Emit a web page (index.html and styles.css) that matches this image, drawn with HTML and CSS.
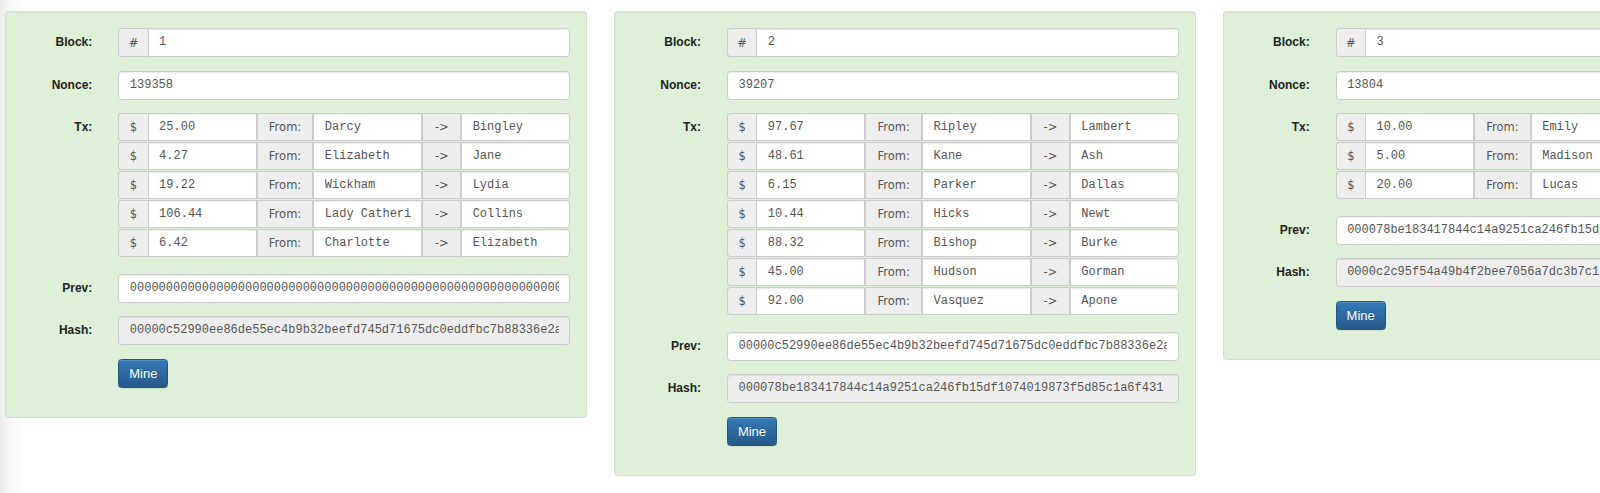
FILE: index.html
```html
<!DOCTYPE html>
<html>
<head>
<meta charset="utf-8">
<title>Blockchain</title>
<link rel="stylesheet" href="styles.css">
</head>
<body>
<div class="chain">

  <div class="well">
    <div class="row"><label class="lbl">Block:</label>
      <div class="group"><span class="addon a-sym first">#</span><div class="field last"><span class="val">1</span></div></div>
    </div>
    <div class="row"><label class="lbl">Nonce:</label>
      <div class="field solo"><span class="val">139358</span></div>
    </div>
    <div class="row txrow"><label class="lbl">Tx:</label>
      <div class="txs">
        <div class="tx"><span class="addon a-sym first">$</span><div class="field"><span class="val">25.00</span></div><span class="addon a-from">From:</span><div class="field"><span class="val">Darcy</span></div><span class="addon a-arrow">-&gt;</span><div class="field last"><span class="val">Bingley</span></div></div>
        <div class="tx"><span class="addon a-sym first">$</span><div class="field"><span class="val">4.27</span></div><span class="addon a-from">From:</span><div class="field"><span class="val">Elizabeth</span></div><span class="addon a-arrow">-&gt;</span><div class="field last"><span class="val">Jane</span></div></div>
        <div class="tx"><span class="addon a-sym first">$</span><div class="field"><span class="val">19.22</span></div><span class="addon a-from">From:</span><div class="field"><span class="val">Wickham</span></div><span class="addon a-arrow">-&gt;</span><div class="field last"><span class="val">Lydia</span></div></div>
        <div class="tx"><span class="addon a-sym first">$</span><div class="field"><span class="val">106.44</span></div><span class="addon a-from">From:</span><div class="field"><span class="val">Lady Catherine</span></div><span class="addon a-arrow">-&gt;</span><div class="field last"><span class="val">Collins</span></div></div>
        <div class="tx"><span class="addon a-sym first">$</span><div class="field"><span class="val">6.42</span></div><span class="addon a-from">From:</span><div class="field"><span class="val">Charlotte</span></div><span class="addon a-arrow">-&gt;</span><div class="field last"><span class="val">Elizabeth</span></div></div>
      </div>
    </div>
    <div class="row"><label class="lbl">Prev:</label>
      <div class="field solo"><span class="val">0000000000000000000000000000000000000000000000000000000000000000</span></div>
    </div>
    <div class="row"><label class="lbl">Hash:</label>
      <div class="field solo ro"><span class="val">00000c52990ee86de55ec4b9b32beefd745d71675dc0eddfbc7b88336e2a</span></div>
    </div>
    <div class="row"><span></span>
      <div><button class="mine">Mine</button></div>
    </div>
  </div>

  <div class="well">
    <div class="row"><label class="lbl">Block:</label>
      <div class="group"><span class="addon a-sym first">#</span><div class="field last"><span class="val">2</span></div></div>
    </div>
    <div class="row"><label class="lbl">Nonce:</label>
      <div class="field solo"><span class="val">39207</span></div>
    </div>
    <div class="row txrow"><label class="lbl">Tx:</label>
      <div class="txs">
        <div class="tx"><span class="addon a-sym first">$</span><div class="field"><span class="val">97.67</span></div><span class="addon a-from">From:</span><div class="field"><span class="val">Ripley</span></div><span class="addon a-arrow">-&gt;</span><div class="field last"><span class="val">Lambert</span></div></div>
        <div class="tx"><span class="addon a-sym first">$</span><div class="field"><span class="val">48.61</span></div><span class="addon a-from">From:</span><div class="field"><span class="val">Kane</span></div><span class="addon a-arrow">-&gt;</span><div class="field last"><span class="val">Ash</span></div></div>
        <div class="tx"><span class="addon a-sym first">$</span><div class="field"><span class="val">6.15</span></div><span class="addon a-from">From:</span><div class="field"><span class="val">Parker</span></div><span class="addon a-arrow">-&gt;</span><div class="field last"><span class="val">Dallas</span></div></div>
        <div class="tx"><span class="addon a-sym first">$</span><div class="field"><span class="val">10.44</span></div><span class="addon a-from">From:</span><div class="field"><span class="val">Hicks</span></div><span class="addon a-arrow">-&gt;</span><div class="field last"><span class="val">Newt</span></div></div>
        <div class="tx"><span class="addon a-sym first">$</span><div class="field"><span class="val">88.32</span></div><span class="addon a-from">From:</span><div class="field"><span class="val">Bishop</span></div><span class="addon a-arrow">-&gt;</span><div class="field last"><span class="val">Burke</span></div></div>
        <div class="tx"><span class="addon a-sym first">$</span><div class="field"><span class="val">45.00</span></div><span class="addon a-from">From:</span><div class="field"><span class="val">Hudson</span></div><span class="addon a-arrow">-&gt;</span><div class="field last"><span class="val">Gorman</span></div></div>
        <div class="tx"><span class="addon a-sym first">$</span><div class="field"><span class="val">92.00</span></div><span class="addon a-from">From:</span><div class="field"><span class="val">Vasquez</span></div><span class="addon a-arrow">-&gt;</span><div class="field last"><span class="val">Apone</span></div></div>
      </div>
    </div>
    <div class="row"><label class="lbl">Prev:</label>
      <div class="field solo"><span class="val">00000c52990ee86de55ec4b9b32beefd745d71675dc0eddfbc7b88336e2a</span></div>
    </div>
    <div class="row"><label class="lbl">Hash:</label>
      <div class="field solo ro"><span class="val">000078be183417844c14a9251ca246fb15df1074019873f5d85c1a6f431</span></div>
    </div>
    <div class="row"><span></span>
      <div><button class="mine">Mine</button></div>
    </div>
  </div>

  <div class="well">
    <div class="row"><label class="lbl">Block:</label>
      <div class="group"><span class="addon a-sym first">#</span><div class="field last"><span class="val">3</span></div></div>
    </div>
    <div class="row"><label class="lbl">Nonce:</label>
      <div class="field solo"><span class="val">13804</span></div>
    </div>
    <div class="row txrow"><label class="lbl">Tx:</label>
      <div class="txs">
        <div class="tx"><span class="addon a-sym first">$</span><div class="field"><span class="val">10.00</span></div><span class="addon a-from">From:</span><div class="field"><span class="val">Emily</span></div><span class="addon a-arrow">-&gt;</span><div class="field last"><span class="val">Jacob</span></div></div>
        <div class="tx"><span class="addon a-sym first">$</span><div class="field"><span class="val">5.00</span></div><span class="addon a-from">From:</span><div class="field"><span class="val">Madison</span></div><span class="addon a-arrow">-&gt;</span><div class="field last"><span class="val">Ethan</span></div></div>
        <div class="tx"><span class="addon a-sym first">$</span><div class="field"><span class="val">20.00</span></div><span class="addon a-from">From:</span><div class="field"><span class="val">Lucas</span></div><span class="addon a-arrow">-&gt;</span><div class="field last"><span class="val">Emily</span></div></div>
      </div>
    </div>
    <div class="row"><label class="lbl">Prev:</label>
      <div class="field solo"><span class="val">000078be183417844c14a9251ca246fb15df1074019873f5d85c1a6f431</span></div>
    </div>
    <div class="row"><label class="lbl">Hash:</label>
      <div class="field solo ro"><span class="val">0000c2c95f54a49b4f2bee7056a7dc3b7c1</span></div>
    </div>
    <div class="row"><span></span>
      <div><button class="mine">Mine</button></div>
    </div>
  </div>

</div>
</body>
</html>
```

FILE: styles.css
```css
html, body {
  margin: 0;
  padding: 0;
  overflow: hidden;
}

body {
  width: 1600px;
  height: 493px;
  background: linear-gradient(to right, #ececec 0px, #f7f7f7 10px, #ffffff 26px);
  font-family: "Liberation Sans", Arial, sans-serif;
  color: #333;
}

.chain {
  display: flex;
  align-items: flex-start;
  gap: 26.7px;
  padding: 11px 0 0 5.3px;
}

.well {
  flex: 0 0 582px;
  width: 582px;
  box-sizing: border-box;
  background: #dff0d8;
  border: 1px solid #d3e1cc;
  border-radius: 3.4px;
  box-shadow: inset 0 1px 1px rgba(0, 0, 0, 0.05);
  padding: 16.3px 16px 15.5px 12px;
}

.row {
  display: grid;
  grid-template-columns: 74px 452px;
  column-gap: 26px;
  margin-bottom: 13.5px;
}

.row:last-child {
  margin-bottom: 13.4px;
}

.txrow {
  margin-bottom: 16.5px;
}

.lbl {
  display: block;
  text-align: right;
  font-weight: bold;
  font-size: 12px;
  line-height: 29px;
  height: 29px;
  color: #222;
}

.group {
  display: flex;
  height: 29px;
}

.field {
  box-sizing: border-box;
  height: 29px;
  background: #fff;
  border: 1px solid #ccc;
  box-shadow: inset 0 1px 1px rgba(0, 0, 0, 0.075);
  padding: 0 10.5px;
  font-family: "Liberation Mono", "Courier New", monospace;
  font-size: 12px;
  line-height: 27px;
  color: #555;
  min-width: 0;
}

.val {
  display: block;
  overflow: hidden;
  white-space: nowrap;
}

.group .field,
.tx .field {
  flex: 1 1 0;
}

.solo {
  border-radius: 3.4px;
}

.ro {
  background: #eee;
}

.field.last {
  border-radius: 0 3.4px 3.4px 0;
}

.txs {
  display: flex;
  flex-direction: column;
  gap: 1px;
}

.tx {
  display: flex;
  height: 28px;
}

.tx .field {
  height: 28px;
  line-height: 26px;
}

.addon {
  box-sizing: border-box;
  flex: 0 0 auto;
  background: #eee;
  border: 1px solid #ccc;
  font-family: "DejaVu Sans", "Liberation Sans", sans-serif;
  font-size: 11.5px;
  color: #555;
  text-align: center;
  display: flex;
  align-items: center;
  justify-content: center;
}

.addon.first {
  border-right: 0;
  border-radius: 3.4px 0 0 3.4px;
}

.a-sym {
  width: 29.3px;
}

.a-from {
  width: 56.6px;
}

.a-arrow {
  width: 38.7px;
}

.mine {
  box-sizing: border-box;
  width: 50px;
  height: 29px;
  padding: 0;
  border: 1px solid #245580;
  border-radius: 3.4px;
  background: linear-gradient(to bottom, #337ab7 0%, #265a88 100%);
  box-shadow: inset 0 1px 0 rgba(255, 255, 255, 0.15), 0 1px 1px rgba(0, 0, 0, 0.075);
  color: #fff;
  text-shadow: 0 -1px 0 rgba(0, 0, 0, 0.2);
  font-family: "Liberation Sans", Arial, sans-serif;
  font-size: 13px;
  line-height: 27px;
  cursor: pointer;
}
```
